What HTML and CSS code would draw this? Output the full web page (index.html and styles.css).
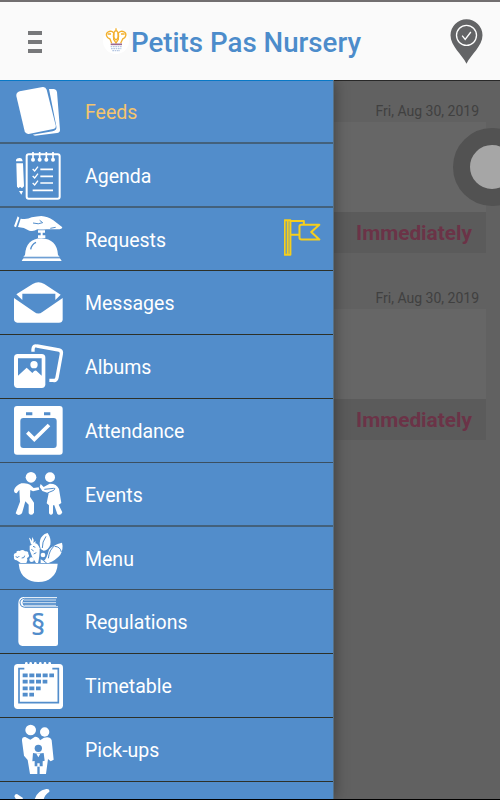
FILE: index.html
```
<!DOCTYPE html>
<html lang="en">
<head>
<meta charset="utf-8">
<title>Petits Pas Nursery</title>
<link rel="stylesheet" href="styles.css">
</head>
<body>
<div class="app">
  <header class="bar">
    <div class="burger"><span></span><span></span><span></span></div>
    <div class="brand">
      <svg class="crest" viewBox="0 0 84 84" width="28" height="28">
        <circle cx="42" cy="42" r="39" fill="#fff"/>
        <g fill="none" stroke="#f2b02e" stroke-width="4">
          <path d="M29 49L24 36C12 32 10 20 18 15C26 10 34 14 36 20L35 37L42 48L49 37L48 20C52 12 60 11 67 15C75 20 72 33 62 36L56 49"/>
          <path d="M37 15C31 26 34 33 42 39C50 33 53 26 47 15C45 10 39 10 37 15M17 21h10M57 21h11M42 4v8"/>
        </g>
        <path d="M26 52h34" stroke="#9b6a93" stroke-width="5"/>
        <path d="M26 59h35M27 65h31M31 71h23" stroke="#b4c6e2" stroke-width="4" stroke-dasharray="5 2"/>
      </svg>
      <h1>Petits Pas Nursery</h1>
    </div>
    <svg class="pin" viewBox="600 55 98 135" width="33" height="45">
      <path d="M649 189C636 163 601 136 601 104A48 48 0 0 1 697 104C697 136 662 163 649 189Z" fill="#636466"/>
      <circle cx="649" cy="104" r="30" fill="none" stroke="#fff" stroke-width="4"/>
      <path d="M636 105l9 11 17-22" fill="none" stroke="#fff" stroke-width="4"/>
    </svg>
  </header>
  <div class="body">
    <nav class="drawer">
      <a class="item soft active"><svg viewBox="0 6 240 189">
        <path d="M147 33L162 33Q170 34 171 42L180 156Q180 164 171 165L105 173L98 170L158 160Q172 157 169 145Z"/>
        <path d="M59 40L128 27Q137 26 140 35L167 142Q169 151 160 153L86 168Q77 169 74 160L49 54Q48 43 59 40Z"/></svg><span>Feeds</span></a>
      <a class="item soft"><svg viewBox="0 198 240 189">
        <rect x="80" y="229" width="99" height="133" rx="6" class="ln w6"/>
        <path d="M99 222v22M119 222v22M139 222v22M159 222v22" class="ln w5"/>
        <circle cx="99" cy="245" r="6"/><circle cx="119" cy="245" r="6"/><circle cx="139" cy="245" r="6"/><circle cx="159" cy="245" r="6"/>
        <path d="M121 274h38M121 295h38M121 315h38M98 337h61" class="ln w5"/>
        <path d="M98 273l6 6 10-13M98 294l6 6 10-13M98 315l6 6 10-13" class="ln w4"/>
        <path d="M48 250V245Q50 240 58 240Q67 239 68 250ZM49 256H69L72 325L66 331L60 326L56 331L51 326ZM57 339H69L64 350Z"/></svg><span>Agenda</span></a>
      <a class="item"><svg viewBox="0 9 240 189">
        <path d="M53 34L58 38L48 67L42 64ZM62 41Q81 45 95 37Q112 34 124 33Q143 34 160 46L187 67Q187 72 179 73H139Q124 74 112 73Q101 81 88 77Q72 67 54 66Z"/>
        <path d="M99 54Q116 59 128 53L119 46M151 70l16-3" class="cut w3"/>
        <path d="M114 76h21v7h-7v8h8v8h-22v-8h8v-8h-8Z"/>
        <path d="M75 150Q78 101 124 100Q171 102 174 150L179 155H70Z"/>
        <path d="M92 133Q95 118 108 112" class="cut w4"/><path d="M71 158H179L185 168H65Z"/>
        <path d="M67 159H183" class="cut w2"/></svg><span>Requests</span>
        <svg class="flag" viewBox="312 420 110 110">
          <path d="M314 424h17v102h-17ZM323 424v102M331 426h40V437M331 467h28M358 442Q358 437 364 437H417L393 459L417 481H364Q358 481 358 475Z"/>
        </svg></a>
      <a class="item"><svg viewBox="0 198 240 189">
        <path d="M49 268L98 237Q115 227 133 237L182 269L166 285V266H67V285Z"/>
        <path d="M42 279L103 321Q115 330 127 321L188 279V344Q187 353 177 353H52Q42 352 42 343Z"/></svg><span>Messages</span></a>
      <a class="item"><svg viewBox="0 0 240 189">
        <path d="M99 50V43Q100 30 111 33L177 45Q186 47 184 57L171 128Q169 138 159 136H148" class="ln w9"/>
        <rect x="42" y="57" width="94" height="102" rx="11"/>
        <path d="M54 70H125V122L109 107Q104 105 97 114L80 98L54 122Z" class="blue"/>
        <circle cx="102" cy="89" r="11"/></svg><span>Albums</span></a>
      <a class="item softone"><svg viewBox="0 192 240 189">
        <rect x="42" y="213" width="146" height="146" rx="9"/>
        <path d="M78 232h19v9H78ZM132 232h19v9H132ZM70 249H161Q170 249 170 258V330Q170 339 161 339H70Q61 339 61 330V258Q61 249 70 249Z" class="blue"/>
        <path d="M82 292L103 313L147 270" class="ln w10"/></svg><span>Attendance</span></a>
      <a class="item soft"><svg viewBox="0 0 240 189">
        <circle cx="93" cy="43" r="16"/><circle cx="150" cy="43" r="15"/>
        <path d="M64 61Q82 59 90 65L101 75L116 73L118 80L99 85L91 81L90 101L102 119V149Q94 161 86 151V125L76 115L66 151Q56 161 47 151L60 116L58 80L50 91Q42 91 42 81Q47 67 64 61Z"/>
        <path d="M122 63L131 72L149 62Q169 61 177 78L184 120L176 125L187 148Q182 160 172 153L163 127H159V151Q153 160 147 151V127L140 121L146 91L127 84L119 72Z"/>
        <path d="M133 79L161 76Q170 76 159 83L142 90" class="cut w3"/></svg><span>Events</span></a>
      <a class="item softone"><svg viewBox="0 192 240 189">
        <path d="M56 302H173Q172 330 153 345Q140 357 115 357Q91 357 78 346Q59 333 56 302Z"/>
        <path d="M50 292Q40 290 42 281Q39 271 49 270Q48 262 59 264Q68 258 75 265Q86 263 85 273Q91 281 81 285Q85 292 79 300H62Z"/>
        <path d="M47 281q8 6 11-2M65 285q9 1 9-7" class="cut w3"/>
        <path d="M89 248L107 241Q114 243 119 256Q119 283 114 300H108Q94 281 89 261Z"/>
        <path d="M94 259l7 5M101 273l8-4M99 250l7 3" class="cut w3"/>
        <path d="M93 244L87 224Q92 224 95 235L97 222Q104 231 100 240L107 234Q107 243 102 248Z"/>
        <circle cx="95" cy="290" r="7"/><circle cx="129" cy="276" r="7"/>
        <path d="M122 258Q116 237 123 224Q133 211 143 210Q154 226 151 245Q145 261 131 263Z"/>
        <path d="M127 255Q126 237 138 220" class="cut w3"/>
        <path d="M122 300V289L131 294Q140 288 147 260Q158 246 186 239Q191 257 181 275Q168 291 146 300Z"/>
        <path d="M145 286Q148 260 163 249M164 250Q181 251 184 267M131 294L140 300" class="cut w3"/></svg><span>Menu</span></a>
      <a class="item"><svg viewBox="0 0 240 189">
        <path d="M70 21H171V26H73Q62 38 73 49H174V162Q174 168 167 168H67Q56 166 55 155V39Q56 23 70 21Z"/>
        <path d="M168 30H72M168 38H69M168 46H73" class="ln w3" opacity=".75"/>
        <path d="M171 25H73Q60 27 60 39Q61 51 73 52H174" class="cut w3"/>
        <text x="114" y="134" class="section">§</text></svg><span>Regulations</span></a>
      <a class="item"><svg viewBox="0 192 240 189">
        <rect x="42" y="222" width="147" height="135" rx="11"/>
        <path d="M79 220v11M92 220v11M106 220v11M121 220v11M135 220v11M149 220v11" class="ln w8 round"/>
        <path d="M73 236H57V338H175V236H157" class="cut w5"/>
        <path d="M68 251h94M68 270h74M68 290h54M68 309h34" class="cut cells" transform="translate(0 5)"/></svg><span>Timetable</span></a>
      <a class="item"><svg viewBox="0 9 240 189">
        <circle cx="92" cy="45" r="16"/><circle cx="134" cy="51" r="14"/>
        <path d="M66 77Q65 65 76 66L91 74L105 65Q117 65 120 76L132 68Q151 63 155 76L161 134L152 139L144 132L138 177H119V155H112V177H90L83 135L72 122Z"/>
        <circle cx="115" cy="100" r="11" class="blue"/>
        <path d="M99 114L113 116L131 114L134 137L128 139V154H104V138L97 139Z" class="blue"/>
        <path d="M109 116L115 127L121 116ZM112 145h7v9h-7Z"/></svg><span>Pick-ups</span></a>
      <a class="item last"><svg viewBox="0 201 240 189">
        <path d="M43 244Q44 237 51 237L69 249Q69 253 62 253H48ZM104 253Q110 228 139 222Q150 221 148 230Q133 241 131 253Z"/></svg></a>
    </nav>
    <main class="feed">
      <section class="post"><time>Fri, Aug 30, 2019</time><div class="card"></div><div class="foot">Immediately</div></section>
      <section class="post"><time>Fri, Aug 30, 2019</time><div class="card"></div><div class="foot">Immediately</div></section>
      <div class="assist"></div>
    </main>
  </div>
</div>
</body>
</html>
```
FILE: styles.css
```
* { box-sizing: border-box; }
body { margin: 0; font-family: Roboto, "Liberation Sans", sans-serif; }
.app {
  width: 500px; height: 800px; overflow: hidden;
  display: flex; flex-direction: column;
  background: #fafafa;
  border-top: 2px solid #726f70;
  border-bottom: 1px solid #000;
}
.bar {
  height: 78px; flex: none; display: flex; align-items: center;
  padding: 0 17px 0 28px;
}
.burger { display: flex; flex-direction: column; gap: 5px; width: 14px; padding-top: 2px; }
.burger span { height: 4px; background: #77787a; }
.brand { display: flex; align-items: center; margin-left: 60px; flex: 1; }
.crest { flex: none; }
.brand h1 {
  margin: 3px 0 0 1px; font-size: 27.7px; line-height: 36px; font-weight: 500;
  color: #4c8ccb; white-space: nowrap;
}
.pin { flex: none; }
.body { flex: 1; min-height: 0; display: flex; }
.drawer {
  width: 334px; flex: none; background: #528dcb;
  display: grid;
  grid-template-rows: 64px 64px 63px 64px 64px 64px 64px 63px 64px 64px 64px 17px;
  border-right: 1px solid #567085;
  box-shadow: inset 0 1px #0878c6, 0 0 14px rgba(0, 0, 0, .4);
  clip-path: inset(0 -20px 0 0);
  z-index: 1;
}
.item {
  display: flex; align-items: center; overflow: hidden;
  border-bottom: 1px solid #2d3028; color: #fff; font-size: 19.5px;
}
.item.soft { border-bottom: 2px solid #43617c; }
.item.softone { border-bottom-color: #3b4f60; }
.item.active { color: #f5c56d; }
.item.last { border: 0; }
.item > svg:first-child { width: 80px; height: 63px; align-self: flex-start; flex: none; fill: #fff; }
.item span { margin-left: 5px; padding-top: 2px; flex: 1; }
.item .flag {
  width: 37px; height: 37px; margin: 0 12px 3px 0;
  fill: none; stroke: #f6ce1b; stroke-width: 6; stroke-linejoin: round;
}
.ln { fill: none; stroke: #fff; }
.cut { fill: none; stroke: #528dcb; }
.blue { fill: #528dcb; }
.w2 { stroke-width: 2; }
.w3 { stroke-width: 3; }
.w4 { stroke-width: 4; }
.w5 { stroke-width: 5; }
.w6 { stroke-width: 6; }
.w8 { stroke-width: 8; }
.w9 { stroke-width: 10; }
.w10 { stroke-width: 11; }
.round { stroke-linecap: round; }
.cells { stroke-width: 11; stroke-dasharray: 15 5; }
.section { fill: #528dcb; font: 500 84px "Noto Sans", Roboto, sans-serif; text-anchor: middle; }
.feed {
  flex: 1; position: relative; overflow: hidden; background: #616161;
  box-shadow: inset 0 1px #282828; padding-top: 20px;
}
.post { height: 187px; }
.post time {
  display: block; height: 22px; line-height: 23px; padding-right: 21px;
  text-align: right; font-size: 14px; color: #404040; white-space: nowrap;
}
.card { height: 90px; margin-right: 14px; background: #666; }
.foot {
  height: 41px; line-height: 43px; margin-right: 14px; padding-right: 14px;
  background: #5b5b5b; color: #6b3347; font-size: 20.8px; font-weight: 700; text-align: right;
}
.assist {
  position: absolute; right: -31px; top: 48px; width: 78px; height: 78px;
  border-radius: 50%; border: 17px solid #525252; background: #a6a6a6;
}
```
